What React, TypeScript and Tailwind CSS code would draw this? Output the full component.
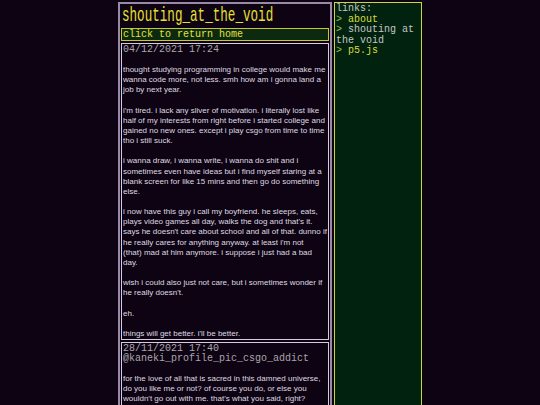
import React from 'react'

const MONO = { fontFamily: '"Liberation Mono", "DejaVu Sans Mono", monospace' }
const SANS = { fontFamily: '"Liberation Sans", Arial, sans-serif' }

// lines are kept as they wrap in the original layout
const POSTS = [
  {
    date: '04/12/2021 17:24',
    to: null as string | null,
    body: [
      ['thought studying programming in college would make me', 'wanna code more, not less. smh how am i gonna land a', 'job by next year.'],
      ["i'm tired. i lack any sliver of motivation. i literally lost like", 'half of my interests from right before i started college and', 'gained no new ones. except i play csgo from time to time', 'tho i still suck.'],
      ['i wanna draw, i wanna write, i wanna do shit and i', 'sometimes even have ideas but i find myself staring at a', 'blank screen for like 15 mins and then go do something', 'else.'],
      ['i now have this guy i call my boyfriend. he sleeps, eats,', "plays video games all day, walks the dog and that's it.", "says he doesn't care about school and all of that. dunno if", "he really cares for anything anyway. at least i'm not", '(that) mad at him anymore. i suppose i just had a bad', 'day.'],
      ['wish i could also just not care, but i sometimes wonder if', "he really doesn't."],
      ['eh.'],
      ["things will get better. i'll be better."],
    ],
  },
  {
    date: '28/11/2021 17:40',
    to: '@kaneki_profile_pic_csgo_addict',
    body: [
      ['for the love of all that is sacred in this damned universe,', 'do you like me or not? of course you do, or else you', "wouldn't go out with me. that's what you said, right?"],
    ],
  },
]

function Post({ date, to, body }: { date: string; to: string | null; body: string[][] }) {
  return (
    <article className="border border-[#d4cce0] px-[1px] mt-[2px]">
      <div className="text-[10px] leading-[10px] pt-[1px] text-[#a9a6ad]" style={MONO}>{date}</div>
      {to && <div className="text-[10px] leading-[10px] text-[#a9a6ad]" style={MONO}>{to}</div>}
      <div className="mt-[10px] text-[8px] leading-[10.15px] text-[#dedae2]" style={SANS}>
        {body.map((p, i) => (
          <p key={i} className={i > 0 ? 'mt-[10.15px]' : ''}>
            {p.map(line => <span key={line} className="block whitespace-nowrap">{line}</span>)}
          </p>
        ))}
      </div>
    </article>
  )
}

export default function App() {
  return (
    <div className="min-h-screen bg-[#0e0312] flex justify-center items-start gap-[2px] pt-[2px] overflow-hidden h-[405px]">
      <main className="w-[214px] border-2 border-[#9a8aa8] px-[1px] pb-2">
        <h1 className="h-[23px] pl-[1px] overflow-visible whitespace-nowrap text-[#e6e034] text-[21px] leading-[23px]" style={MONO}>
          <span className="inline-block origin-left scale-x-[0.6]">shouting_at_the_void</span>
        </h1>
        <a className="block mt-[1px] border border-[#c9c62e] bg-[#0b2a0f] text-[#e6e23c] text-[10px] leading-[11px] px-[1px]" style={MONO}>
          click to return home
        </a>
        {POSTS.map(p => <Post key={p.date} {...p} />)}
      </main>

      <aside className="w-[88px] self-stretch border border-[#cdd346] bg-[#01220f] px-[1px] pt-[1px] text-[10px] leading-[10.5px] text-[#c4c6c0] min-h-[405px] whitespace-nowrap" style={MONO}>
        <div>links:</div>
        <div><span className="text-[#9dc042]">&gt;</span> <span className="text-[#d9d93a]">about</span></div>
        <div><span className="text-[#9dc042]">&gt;</span> shouting at</div>
        <div>the void</div>
        <div><span className="text-[#9dc042]">&gt;</span> <span className="text-[#d9d93a]">p5.js</span></div>
      </aside>
    </div>
  )
}
